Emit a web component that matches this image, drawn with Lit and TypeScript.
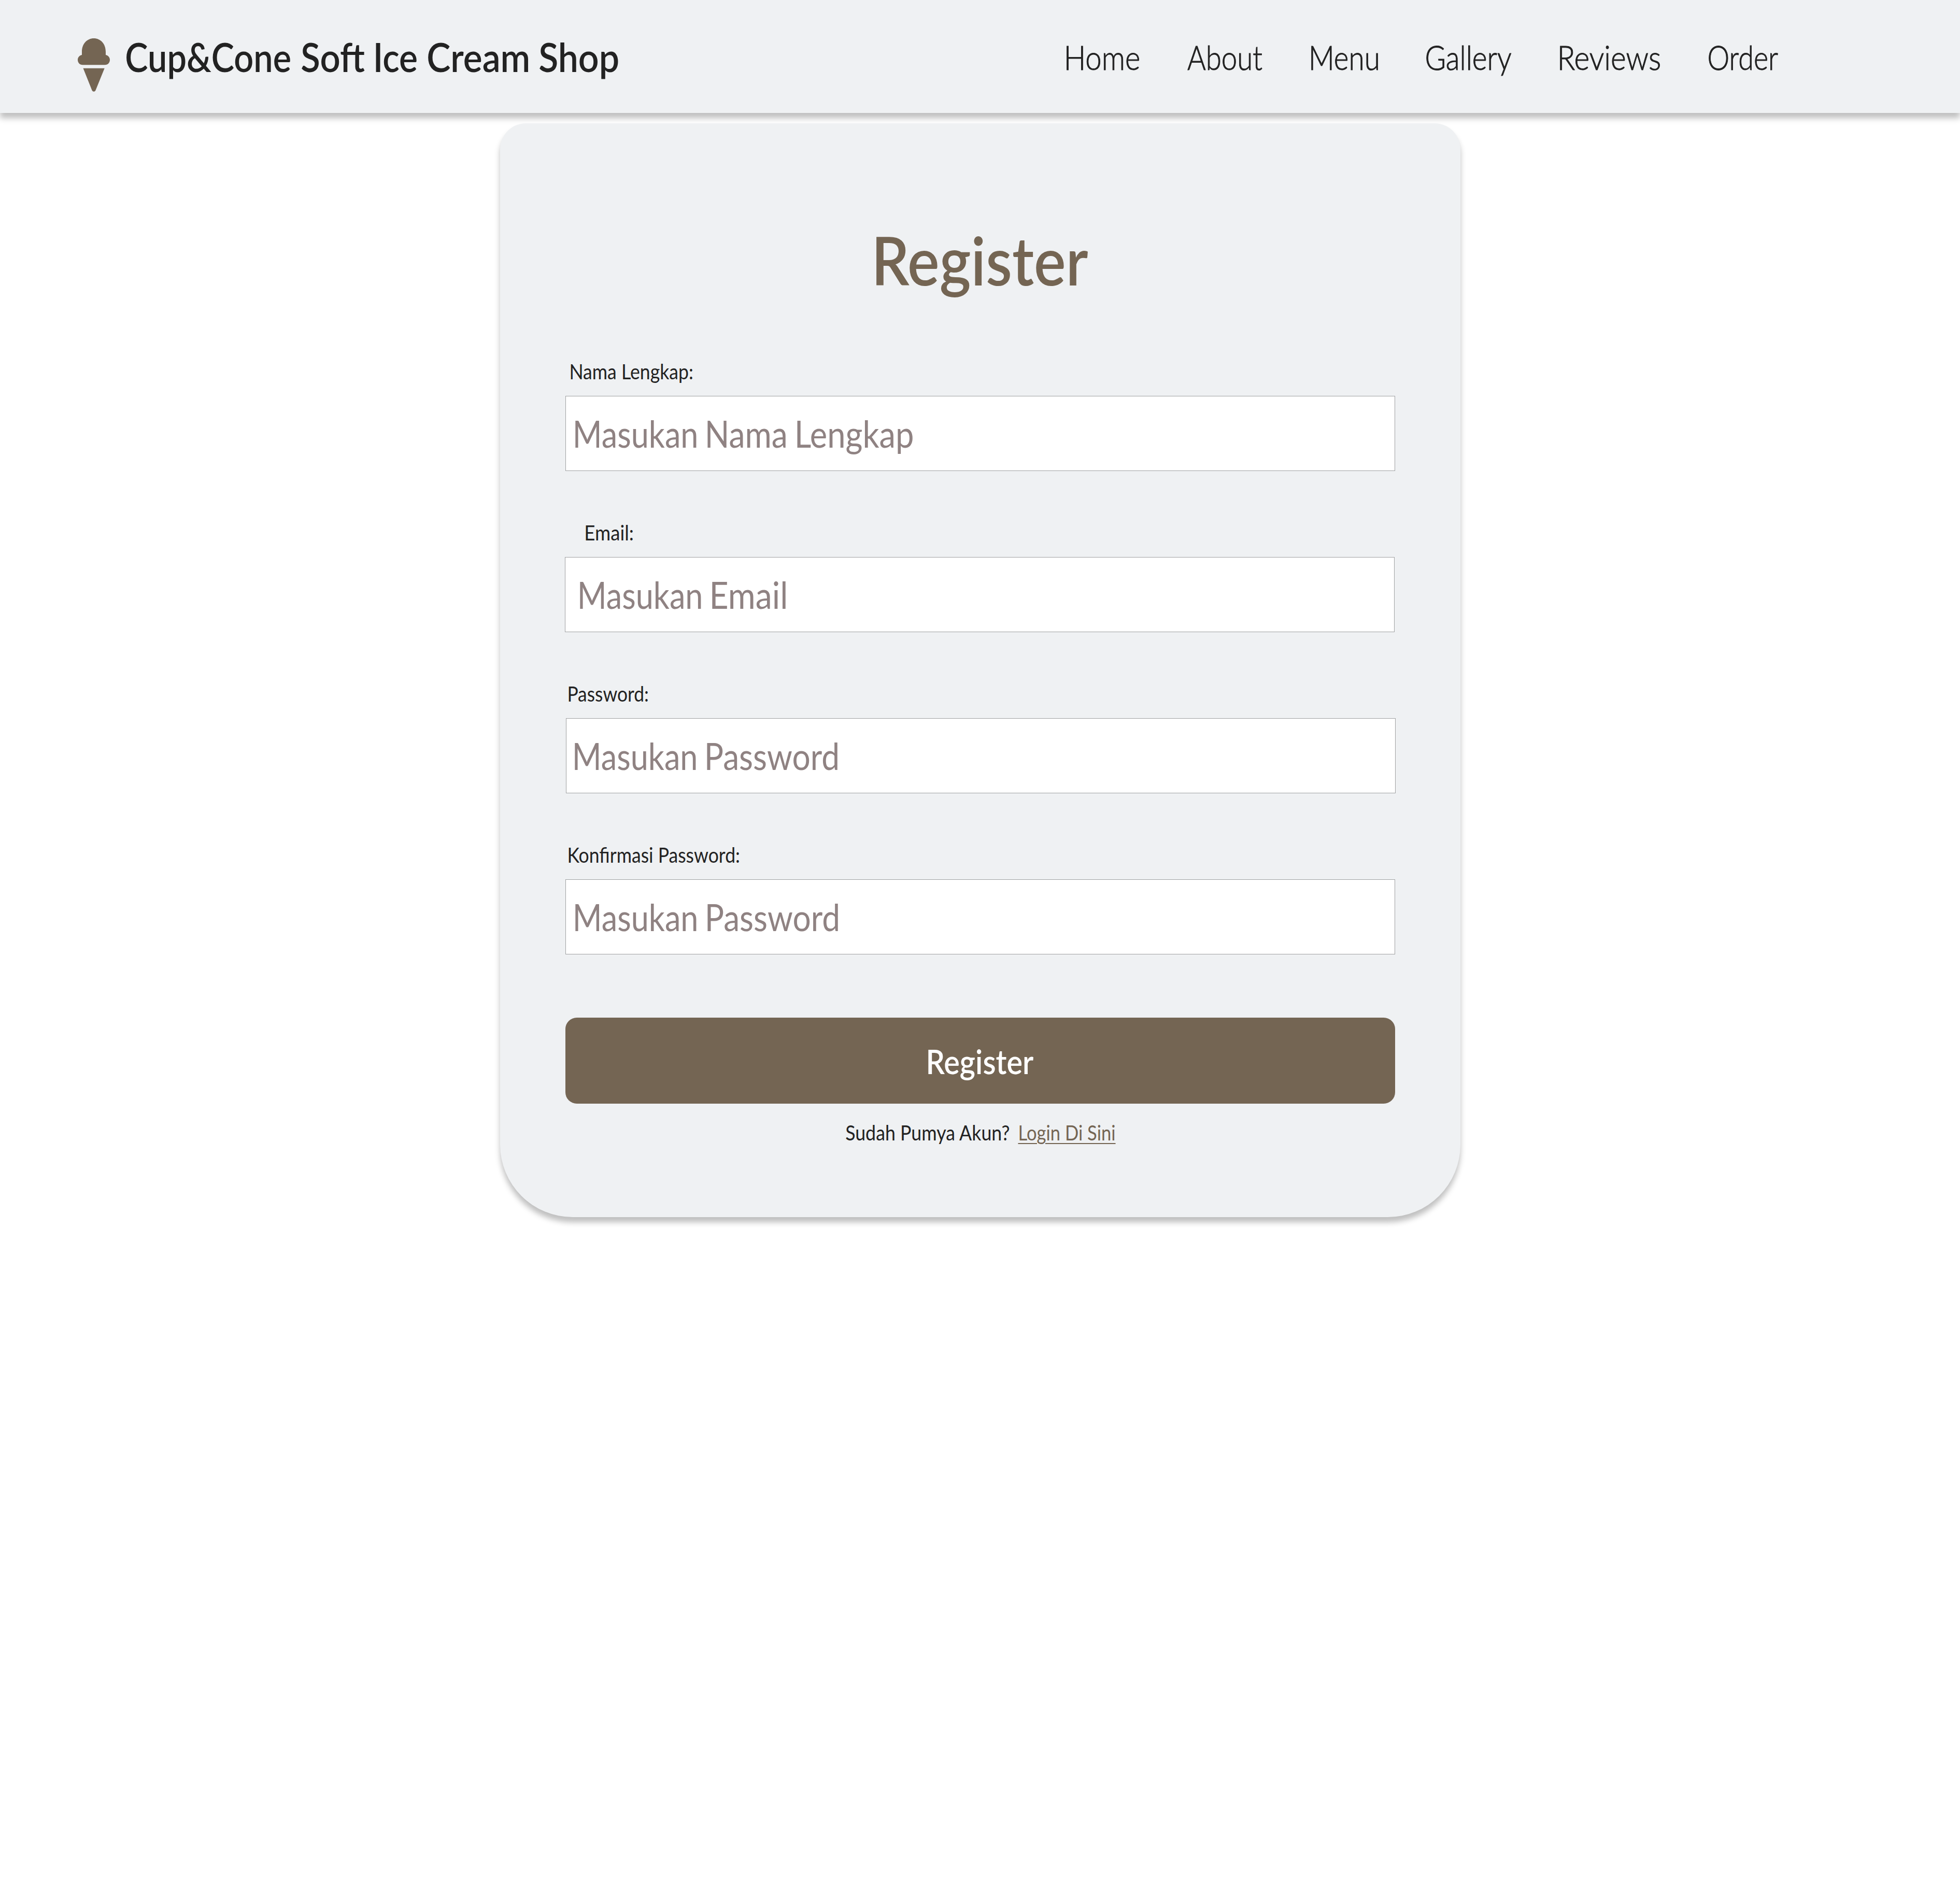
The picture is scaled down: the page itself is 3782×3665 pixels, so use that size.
import { LitElement, html, css } from "lit";
import { customElement, property } from "lit/decorators.js";
import { styleMap } from "lit/directives/style-map.js";

const FAMILY = 'Lato, "Open Sans", sans-serif';
const canvas = document.createElement("canvas").getContext("2d")!;

/**
 * A line of text condensed so that its ink fills the given widths:
 * one width for the whole line, or one for each word.
 */
@customElement("fit-text")
class FitText extends LitElement {
  @property() text = "";
  @property({ type: Number }) size = 40;
  @property({ type: Number }) weight = 400;
  @property({ type: Array }) widths: number[] = [100];
  @property({ type: Number }) stroke = 0;
  @property({ type: Boolean }) underline = false;

  static styles = css`
    :host {
      display: block;
      flex: none;
    }
    .line {
      display: flex;
      gap: 21.7px;
      line-height: 1;
    }
    .box {
      display: block;
      flex: none;
    }
    .run {
      display: inline-block;
      vertical-align: top;
      white-space: pre;
      line-height: 1;
      font-family: Lato, "Open Sans", sans-serif;
      transform-origin: 0 0;
    }
    .underline {
      text-decoration: underline;
      text-decoration-thickness: 2px;
      text-underline-offset: 5px;
    }
  `;

  private run(text: string, width: number) {
    canvas.font = `${this.weight} ${this.size}px ${FAMILY}`;
    const m = canvas.measureText(text);
    const left = -m.actualBoundingBoxLeft;
    const scale = width / (m.actualBoundingBoxRight - left);
    return html`<span class="box" style=${styleMap({ width: `${width}px`, height: `${this.size}px` })}
      ><span
        class=${this.underline ? "run underline" : "run"}
        style=${styleMap({
          fontSize: `${this.size}px`,
          fontWeight: `${this.weight}`,
          webkitTextStroke: this.stroke ? `${this.stroke}px currentColor` : "0",
          transform: `scaleX(${scale}) translateX(${-left}px)`,
        })}
        >${text}</span
      ></span
    >`;
  }

  render() {
    const parts = this.widths.length > 1 ? this.text.split(" ") : [this.text];
    return html`<span class="line">${parts.map((p, i) => html`${this.run(p, this.widths[i])} `)}</span>`;
  }
}

const NAV = [
  { text: "Home", width: 140 },
  { text: "About", width: 145 },
  { text: "Menu", width: 129 },
  { text: "Gallery", width: 164.5 },
  { text: "Reviews", width: 193 },
  { text: "Order", width: 133.5 },
];

const FIELDS = [
  { cls: "name", label: "Nama Lengkap:", lw: 235, hint: "Masukan Nama Lengkap", hw: [233.5, 151, 223] },
  { cls: "email", label: "Email:", lw: 91, hint: "Masukan Email", hw: [233.5, 142] },
  { cls: "pass", label: "Password:", lw: 153, hint: "Masukan Password", hw: [233.5, 252] },
  { cls: "confirm", label: "Konfirmasi Password:", lw: 329, hint: "Masukan Password", hw: [233.5, 252] },
];

@customElement("app-root")
class AppRoot extends LitElement {
  static styles = css`
    :host {
      display: block;
      min-height: 3665px;
      background: #fff;
      color: #222;
    }
    .header {
      display: flex;
      align-items: flex-start;
      box-sizing: border-box;
      height: 218px;
      padding: 0 352px 0 150px;
      background: #eff1f3;
      box-shadow: 0 10px 11px rgba(0, 0, 0, 0.25);
    }
    .logo {
      flex: none;
      width: 62px;
      height: 103px;
      margin-top: 74px;
      fill: #746553;
    }
    .brand {
      margin: 72px 0 0 32px;
    }
    .nav {
      display: flex;
      gap: 93.5px;
      margin-left: auto;
      padding-top: 78px;
    }
    .card {
      box-sizing: border-box;
      width: 1852.5px;
      height: 2111px;
      margin: 20px 0 0 965px;
      padding: 198px 125.5px 0 126px;
      border-radius: 50px 50px 140px 140px;
      background: #eff1f3;
      box-shadow: 0 10px 11px rgba(0, 0, 0, 0.25);
    }
    .title {
      display: flex;
      padding-left: 600px;
      color: #746553;
    }
    .fields {
      display: flex;
      flex-direction: column;
      gap: 98px;
      margin-top: 130px;
    }
    .field {
      display: flex;
      flex-direction: column;
      gap: 27px;
    }
    .label {
      padding-left: 6px;
    }
    .input {
      display: flex;
      box-sizing: border-box;
      width: 1601px;
      height: 145px;
      padding: 36px 0 0 18px;
      border: 1px solid #a0a1a2;
      background: #fff;
      color: #8f8282;
    }
    .name .label {
      padding-left: 10px;
    }
    .email .label {
      padding-left: 39px;
    }
    .email .input {
      margin-left: -1px;
      padding-left: 28px;
    }
    .pass .input {
      margin-left: 1px;
      padding-left: 16px;
    }
    .button {
      display: flex;
      justify-content: center;
      box-sizing: border-box;
      width: 1601px;
      height: 166px;
      margin-top: 122px;
      padding: 52px 0 0 2px;
      border-radius: 22px;
      background: #746553;
      color: #fff;
    }
    .footer {
      display: flex;
      gap: 18.5px;
      margin-top: 35px;
      padding-left: 541px;
    }
    .link {
      color: #746553;
    }
  `;

  render() {
    return html`
      <header class="header">
        <svg class="logo" viewBox="0 0 62 103">
          <path
            d="M8 32V26C8 10.500 18 0 31 0S54 10.500 54 26V32C59 33 62 37 62 41.500C62 47 58 51.300 52.500 51.300H9.500C4 51.300 0 47 0 41.500C0 37 3 33 8 32Z"
          />
          <path d="M10.500 57.700H51.700L34.400 100.400Q33.300 102.800 31 102.800T27.600 100.400Z" />
        </svg>
        <fit-text
          class="brand"
          text="Cup&amp;Cone Soft Ice Cream Shop"
          size="76"
          weight="600"
          .widths=${[316, 122, 79, 193.5, 151.5]}
        ></fit-text>
        <nav class="nav">
          ${NAV.map(
            (n) => html`<fit-text .text=${n.text} size="64.5" weight="300" stroke="1" .widths=${[n.width]}></fit-text>`,
          )}
        </nav>
      </header>
      <main class="card">
        <div class="title">
          <fit-text text="Register" size="130" weight="600" .widths=${[408.5]}></fit-text>
        </div>
        <div class="fields">
          ${FIELDS.map(
            (f) => html`<div class="field ${f.cls}">
              <fit-text class="label" .text=${f.label} size="41" weight="400" .widths=${[f.lw]}></fit-text>
              <div class="input">
                <fit-text .text=${f.hint} size="71" weight="400" .widths=${f.hw}></fit-text>
              </div>
            </div>`,
          )}
        </div>
        <div class="button">
          <fit-text text="Register" size="64.5" weight="600" .widths=${[203.5]}></fit-text>
        </div>
        <div class="footer">
          <fit-text text="Sudah Pumya Akun?" size="41" weight="400" .widths=${[316.5]}></fit-text>
          <fit-text class="link" text="Login Di Sini" size="41" weight="400" .widths=${[184]} underline></fit-text>
        </div>
      </main>
    `;
  }
}
